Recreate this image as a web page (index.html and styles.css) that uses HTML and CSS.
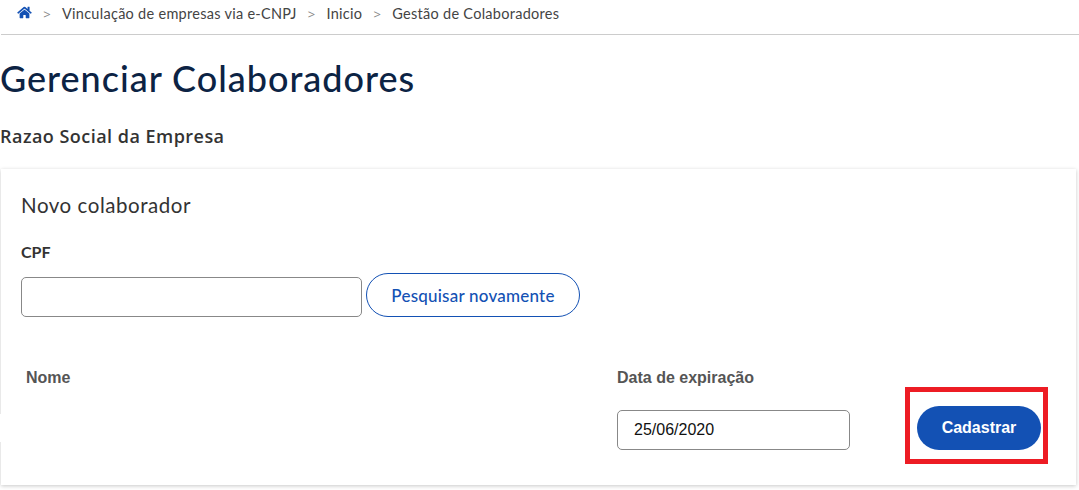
FILE: index.html
```html
<!DOCTYPE html>
<html lang="pt-BR">
<head>
<meta charset="utf-8">
<title>Gerenciar Colaboradores</title>
<link rel="stylesheet" href="styles.css">
</head>
<body>
<nav class="crumbs">
  <svg class="home" viewBox="0 0 576 512" aria-hidden="true"><path d="M280.4 148.3 96 300.1V464a16 16 0 0 0 16 16l112-.3a16 16 0 0 0 15.9-16V368a16 16 0 0 1 16-16h64a16 16 0 0 1 16 16v95.6a16 16 0 0 0 16 16.1l112 .3a16 16 0 0 0 16-16V300L295.7 148.3a12.2 12.2 0 0 0-15.3 0zM571.6 251.5 488 182.6V44a12 12 0 0 0-12-12h-56a12 12 0 0 0-12 12v72.6L318.5 43a48 48 0 0 0-61 0L4.300 251.500a12 12 0 0 0-1.600 16.900l25.500 31A12 12 0 0 0 45.200 301l235.200-193.700a12.200 12.200 0 0 1 15.300 0L530.900 301a12 12 0 0 0 16.900-1.600l25.500-31a12 12 0 0 0-1.700-16.900z"/></svg>
  <span class="sep">&gt;</span><span class="crumb">Vinculação de empresas via e-CNPJ</span>
  <span class="sep">&gt;</span><span class="crumb">Inicio</span>
  <span class="sep">&gt;</span><span class="crumb">Gestão de Colaboradores</span>
</nav>
<main class="page">
  <h1 class="title">Gerenciar Colaboradores</h1>
  <h2 class="company">Razao Social da Empresa</h2>
  <section class="card">
    <h3 class="card-title">Novo colaborador</h3>
    <label class="cpf-label" for="cpf">CPF</label>
    <div class="search-row">
      <input class="field cpf-field" id="cpf" type="text">
      <button class="btn btn-outline" type="button">Pesquisar novamente</button>
    </div>
    <div class="detail-row">
      <div class="col-name">
        <div class="label label-name">Nome</div>
        <div class="name-value"></div>
      </div>
      <div class="col-date">
        <label class="label label-date" for="exp">Data de expiração</label>
        <input class="field date-field" id="exp" type="text" value="25/06/2020">
      </div>
      <div class="highlight">
        <button class="btn btn-solid" type="button">Cadastrar</button>
      </div>
    </div>
  </section>
</main>
</body>
</html>
```
FILE: styles.css
```css
* { box-sizing: border-box; }
html, body { margin: 0; padding: 0; background: #fff; }
body { font-family: "Lato", "Liberation Sans", sans-serif; color: #333; height: 490px; overflow: hidden; }

.crumbs {
  display: flex; align-items: center;
  height: 35px; margin-left: 1px; padding: 0 0 7px 16px;
  border-bottom: 1px solid #ccc;
  font-size: 14.5px; color: #444;
}
.home { width: 15px; height: 13px; fill: #1351b4; margin-bottom: 2px; }
.sep { color: #888; font-size: 13px; margin: 0 11.250px; font-family: "Open Sans", sans-serif; }
.crumb { letter-spacing: .28px; }

.page { padding: 0 3px 0 1px; }
.title {
  margin: 21px 0 0 -1px; font-weight: 500; font-size: 36px; line-height: 44px;
  color: #0c2344; letter-spacing: .98px;
}
.company { margin: 25px 0 0 -1px; font-family: "Open Sans", sans-serif; font-size: 18px; line-height: 22px; font-weight: 600; color: #333; letter-spacing: .47px; }

.card {
  margin-top: 22px; height: 316px; padding: 23px 20px 0;
  background: #fff; box-shadow: 0 1px 4px rgba(0,0,0,.22);
}
.card-title { margin: 0; font-size: 20.500px; font-weight: 400; line-height: 26px; color: #333; letter-spacing: .55px; }
.cpf-label { display: block; margin-top: 24px; font-size: 16px; font-weight: 700; line-height: 20px; color: #333; }

.search-row { display: flex; align-items: flex-end; gap: 4px; margin-top: 11px; }
.field {
  height: 40px; border: 1px solid #888; border-radius: 5px; background: #fff;
  font-family: "Liberation Sans", sans-serif; font-size: 16px; color: #111; outline: 0;
}
.cpf-field { width: 341px; }
.date-field { width: 233px; padding: 0 16px; display: block; margin-top: 22px; }

.btn {
  height: 44px; border-radius: 22px; font-family: "Lato", sans-serif;
  font-size: 17px; font-weight: 500; cursor: pointer;
}
.btn-outline { width: 214px; background: #fff; border: 1px solid #1351b4; color: #1351b4; letter-spacing: .22px; }
.btn-solid { width: 124px; background: #1351b4; border: 0; color: #fff; font-weight: 700; font-family: "Liberation Sans", sans-serif; font-size: 16px; }

.detail-row { display: flex; align-items: flex-start; margin-top: 51px; }
.label { display: block; font-family: "Liberation Sans", sans-serif; font-size: 16px; font-weight: 700; line-height: 20px; color: #555; }
.col-name { width: 596px; position: relative; }
.label-name { margin-left: 5px; }
.name-value { position: absolute; left: -22px; top: 46px; width: 100px; height: 28px; background: #fff; }
.col-date { width: 288px; }
.highlight {
  width: 143px; height: 77px; margin-top: 19px; padding: 14px 0 0 7px;
  border: 5px solid #ed1c24;
}
```
